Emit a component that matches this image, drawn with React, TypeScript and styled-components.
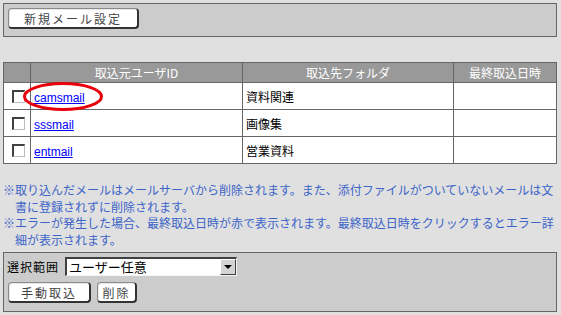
import React from "react";
import styled, { createGlobalStyle } from "styled-components";

const GlobalStyle = createGlobalStyle`
  html, body { margin: 0; padding: 0; }
  body {
    background: #e0e0e0;
    font-family: "Liberation Sans", "Noto Sans CJK JP", sans-serif;
    font-size: 12px;
    color: #000;
  }
`;

const Page = styled.div`
  width: 554px;
  padding: 3px 4px 0 3px;
`;

const Panel = styled.div<{ $h: number }>`
  box-sizing: border-box;
  height: ${(p) => p.$h}px;
  background: #cccccc;
  border: 1px solid #666666;
  padding: 4px 3px;
`;

const Btn = styled.button<{ $w: number }>`
  box-sizing: border-box;
  width: ${(p) => p.$w}px;
  height: 21px;
  background: #ffffff;
  border: 1px solid #8a8a8a;
  border-right: 2px solid #333333;
  border-bottom: 2px solid #333333;
  border-radius: 4px;
  box-shadow: inset 1px 1px 0 #e8e8e8;
  font-family: "Noto Sans CJK JP", sans-serif;
  font-size: 12px;
  letter-spacing: 2px;
  color: #444444;
  padding: 0;
  line-height: 17px;
  cursor: pointer;
`;

const TopBar = styled(Panel)`
  padding: 4px 4px;
`;

const TableWrap = styled.div`
  position: relative;
  margin-top: 25px;
`;

const Table = styled.table`
  box-sizing: border-box;
  width: 554px;
  border-collapse: collapse;
  border: 1px solid #666666;
  table-layout: fixed;
  background: #ffffff;
`;

const Th = styled.th<{ $w?: number }>`
  ${(p) => (p.$w ? `width: ${p.$w}px;` : "")}
  height: 19px;
  padding: 0;
  background: #999999;
  color: #ffffff;
  font-family: "Noto Sans CJK JP", sans-serif;
  font-weight: normal;
  font-size: 12px;
  border: 1px solid #666666;
  text-align: center;
`;

const Td = styled.td`
  height: 26px;
  padding: 0 0 0 3px;
  border: 1px solid #666666;
  font-family: "Noto Sans CJK JP", sans-serif;
  font-size: 12px;
`;

const CheckCell = styled(Td)`
  padding-left: 8px;
`;

const Check = styled.span`
  display: block;
  box-sizing: border-box;
  width: 13px;
  height: 13px;
  background: #ffffff;
  border-top: 2px solid #404040;
  border-left: 2px solid #404040;
  border-right: 1px solid #bdbdbd;
  border-bottom: 1px solid #bdbdbd;
`;

const UserLink = styled.a`
  font-family: "Liberation Sans", sans-serif;
  color: #0000ff;
  text-decoration: underline;
  font-size: 12px;
`;

const Circle = styled.svg`
  position: absolute;
  left: 19px;
  top: 19px;
  pointer-events: none;
`;

const Notes = styled.div`
  margin-top: 18px;
  color: #3c64c8;
  font-family: "Noto Sans CJK JP", sans-serif;
  font-size: 12px;
  line-height: 16.5px;
`;

const Note = styled.p`
  margin: 0;
  padding-left: 12px;
  text-indent: -12px;
`;

const Bottom = styled(Panel)`
  margin-top: 4px;
  display: flex;
  flex-direction: column;
  gap: 6px;
`;

const Row = styled.div`
  display: flex;
  align-items: center;
  gap: 6px;
`;

const Label = styled.span`
  font-family: "Noto Sans CJK JP", sans-serif;
  font-size: 12px;
  letter-spacing: 1px;
`;

const SelectBox = styled.div`
  box-sizing: border-box;
  width: 172px;
  height: 19px;
  display: flex;
  align-items: stretch;
  background: #ffffff;
  border-top: 2px solid #404040;
  border-left: 2px solid #404040;
  border-right: 1px solid #f4f4f4;
  border-bottom: 1px solid #f4f4f4;
`;

const SelectText = styled.span`
  flex: 1;
  padding-left: 2px;
  font-family: "Noto Sans CJK JP", sans-serif;
  font-size: 13px;
  line-height: 16px;
`;

const DropBtn = styled.span`
  box-sizing: border-box;
  width: 16px;
  background: #d4d4d4;
  border-top: 1px solid #ffffff;
  border-left: 1px solid #ffffff;
  border-right: 1px solid #404040;
  border-bottom: 1px solid #404040;
  display: flex;
  align-items: center;
  justify-content: center;
`;

const Arrow = styled.span`
  width: 0;
  height: 0;
  border-left: 4px solid transparent;
  border-right: 4px solid transparent;
  border-top: 4px solid #000;
`;

const BtnRow = styled.div`
  display: flex;
  gap: 6px;
  padding-left: 1px;
`;

const rows = [
  { id: "camsmail", folder: "資料関連" },
  { id: "sssmail", folder: "画像集" },
  { id: "entmail", folder: "営業資料" },
];

export default function App() {
  return (
    <>
      <GlobalStyle />
      <Page>
        <TopBar $h={34}>
          <Btn $w={131}>新規メール設定</Btn>
        </TopBar>
        <TableWrap>
          <Table>
            <thead>
              <tr>
                <Th $w={26}></Th>
                <Th $w={211}>取込元ユーザID</Th>
                <Th $w={210}>取込先フォルダ</Th>
                <Th>最終取込日時</Th>
              </tr>
            </thead>
            <tbody>
              {rows.map((r) => (
                <tr key={r.id}>
                  <CheckCell>
                    <Check />
                  </CheckCell>
                  <Td>
                    <UserLink href="#">{r.id}</UserLink>
                  </Td>
                  <Td>{r.folder}</Td>
                  <Td></Td>
                </tr>
              ))}
            </tbody>
          </Table>
          <Circle width="82" height="31" viewBox="0 0 82 31">
            <ellipse cx="41" cy="15.5" rx="38.5" ry="13" fill="none" stroke="#e8000a" strokeWidth="3" />
          </Circle>
        </TableWrap>
        <Notes>
          <Note>※取り込んだメールはメールサーバから削除されます。また、添付ファイルがついていないメールは文書に登録されずに削除されます。</Note>
          <Note>※エラーが発生した場合、最終取込日時が赤で表示されます。最終取込日時をクリックするとエラー詳細が表示されます。</Note>
        </Notes>
        <Bottom $h={60}>
          <Row>
            <Label>選択範囲</Label>
            <SelectBox>
              <SelectText>ユーザー任意</SelectText>
              <DropBtn>
                <Arrow />
              </DropBtn>
            </SelectBox>
          </Row>
          <BtnRow>
            <Btn $w={83}>手動取込</Btn>
            <Btn $w={40}>削除</Btn>
          </BtnRow>
        </Bottom>
      </Page>
    </>
  );
}
